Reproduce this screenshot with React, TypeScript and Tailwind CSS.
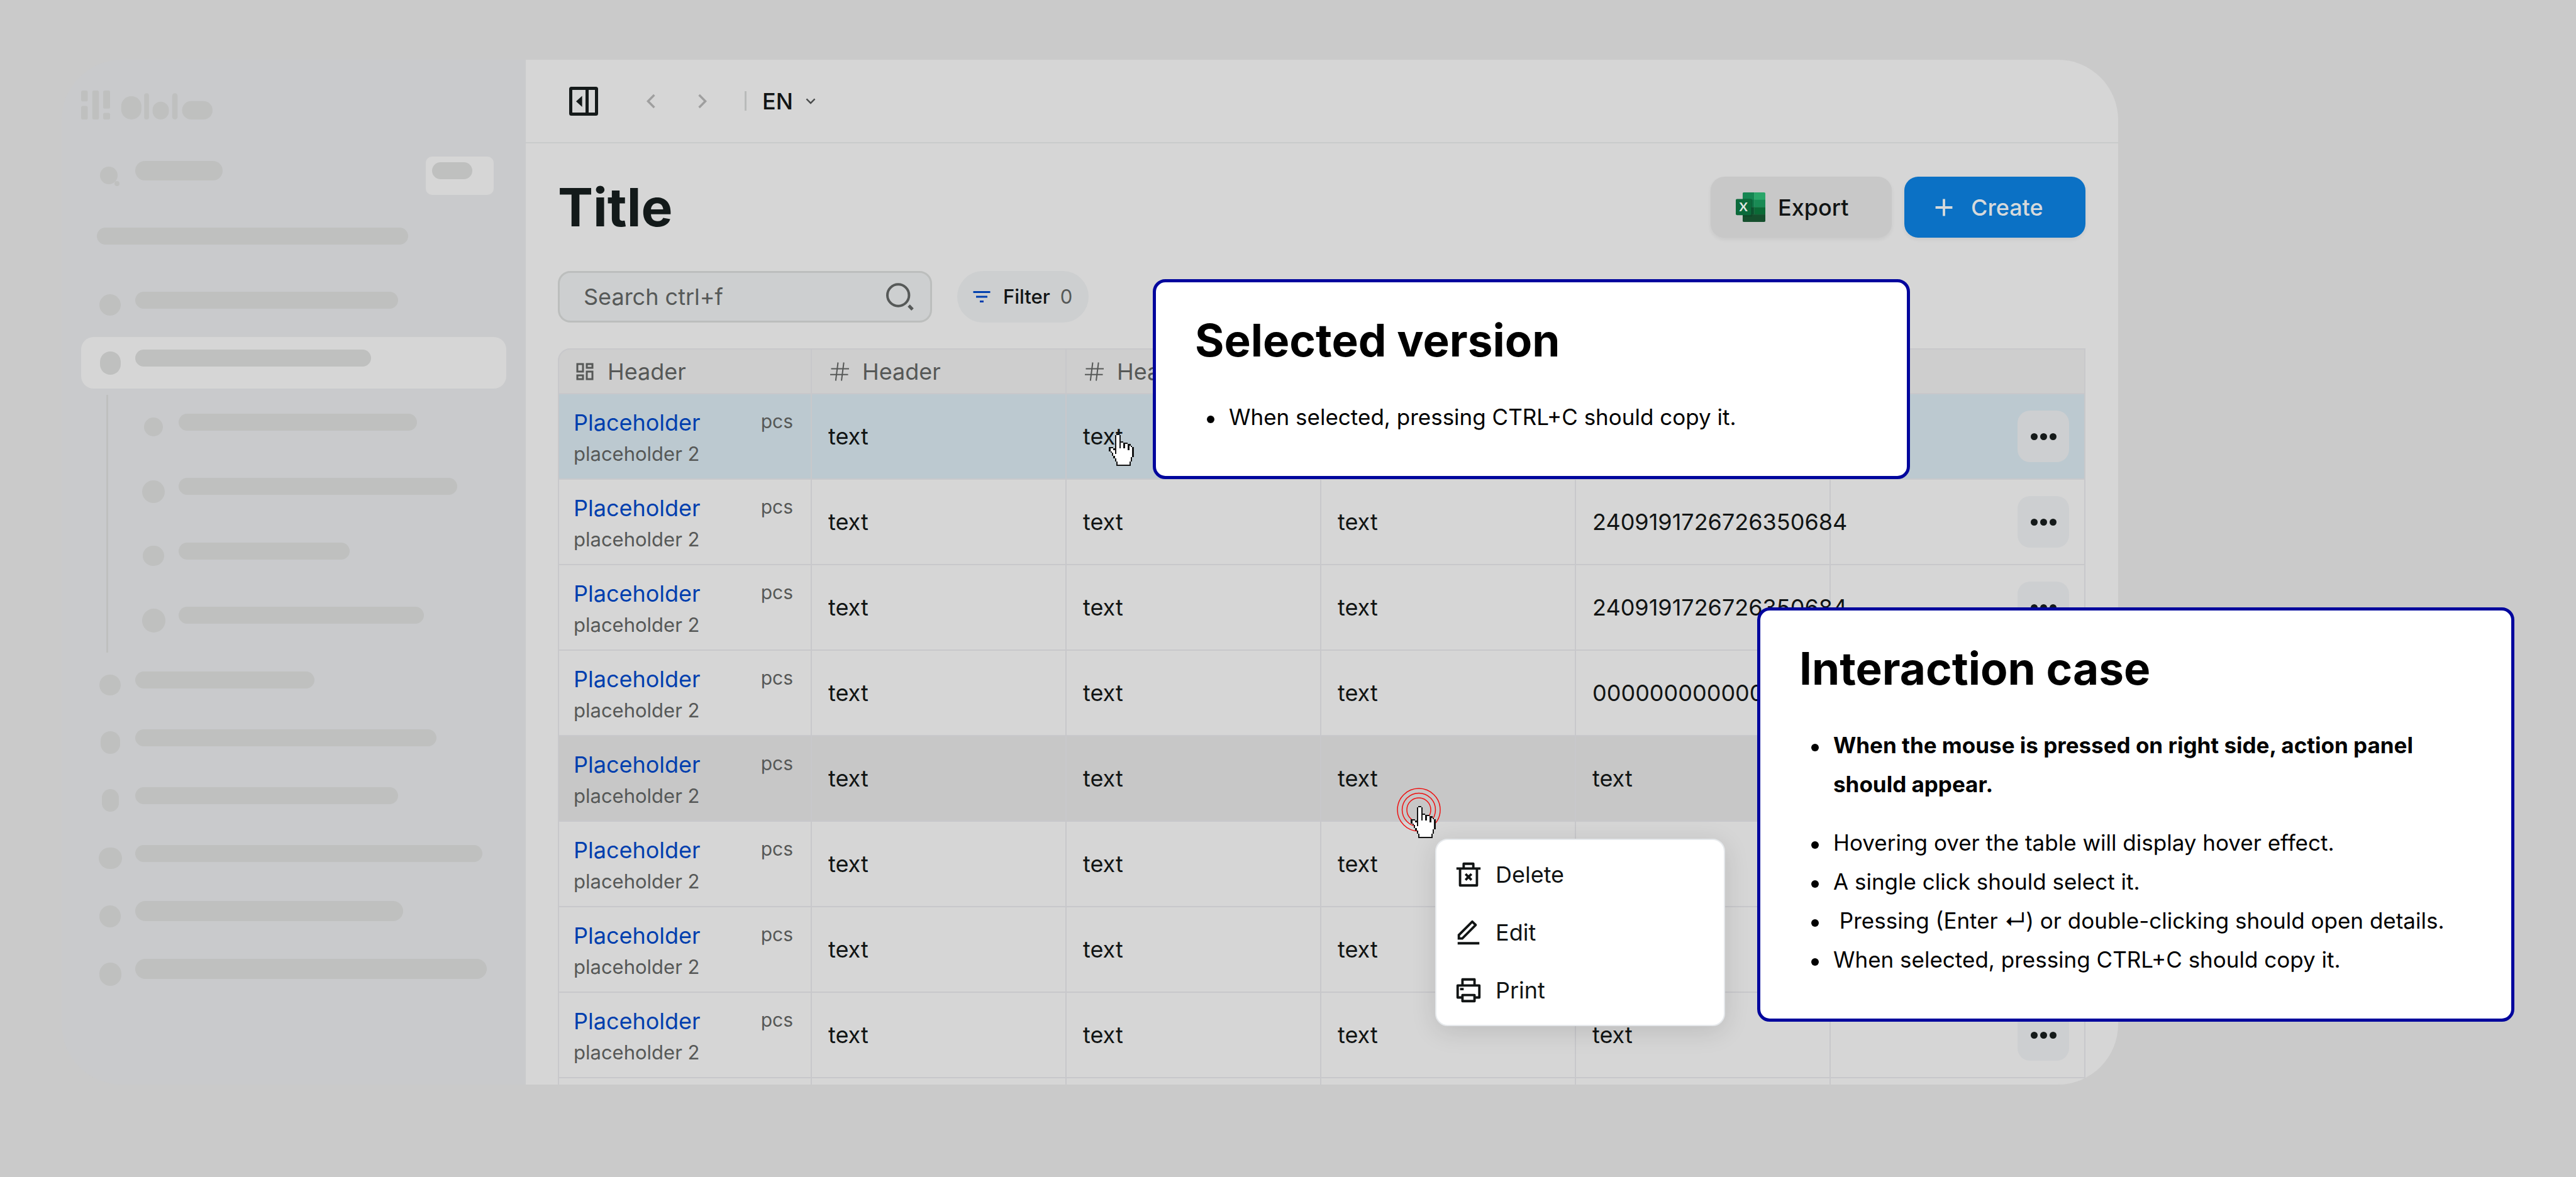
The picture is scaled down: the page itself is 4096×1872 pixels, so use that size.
import React from "react";

type IconProps = { d: string; className?: string };

function Icon({ d, className }: IconProps) {
  return (
    <svg viewBox="0 0 24 24" fill="currentColor" aria-hidden="true" className={`shrink-0 ${className ?? ""}`}>
      <path d={d} />
    </svg>
  );
}

const ICONS = {
  left: "M10.828 12l4.95 4.95-1.414 1.415L8 12l6.364-6.364 1.414 1.414z",
  right: "M13.172 12l-4.95-4.95 1.414-1.414L16 12l-6.364 6.364-1.414-1.414z",
  down: "M12 13.172l4.95-4.95 1.414 1.414L12 16 5.636 9.636 7.05 8.222z",
  plus: "M11 11V5h2v6h6v2h-6v6h-2v-6H5v-2z",
  filter: "M10 18h4v-2h-4v2zM3 6v2h18V6H3zm3 7h12v-2H6v2z",
  dashboard:
    "M13 21V11h8v10h-8zM3 13V3h8v10H3zm6-2V5H5v6h4zM3 21v-6h8v6H3zm2-2h4v-2H5v2zm10 0h4v-6h-4v6zM13 3h8v6h-8V3zm2 2v2h4V5h-4z",
  trash:
    "M17 6h5v2h-2v13a1 1 0 0 1-1 1H5a1 1 0 0 1-1-1V8H2V6h5V3a1 1 0 0 1 1-1h8a1 1 0 0 1 1 1v3zm1 2H6v12h12V8zm-4.586 6l1.768 1.768-1.414 1.414L12 15.414l-1.768 1.768-1.414-1.414L10.586 14l-1.768-1.768 1.414-1.414L12 12.586l1.768-1.768 1.414 1.414L13.414 14zM9 4v2h6V4H9z",
  edit: "M6.414 16L16.556 5.858l-1.414-1.414L5 14.586V16h1.414zm.829 2H3v-4.243L14.435 2.322a1 1 0 0 1 1.414 0l2.829 2.829a1 1 0 0 1 0 1.414L7.243 18zM3 20h18v2H3v-2z",
  printer:
    "M6 19H3a1 1 0 0 1-1-1V8a1 1 0 0 1 1-1h3V3a1 1 0 0 1 1-1h10a1 1 0 0 1 1 1v4h3a1 1 0 0 1 1 1v10a1 1 0 0 1-1 1h-3v2a1 1 0 0 1-1 1H7a1 1 0 0 1-1-1v-2zm0-2v-1a1 1 0 0 1 1-1h10a1 1 0 0 1 1 1v1h2V9H4v8h2zM8 4v3h8V4H8zm0 13v3h8v-3H8zm-3-7h3v2H5v-2z",
};

function PanelIcon() {
  return (
    <svg viewBox="0 0 46 46" className="size-[46px]" aria-hidden="true">
      <rect x="2.5" y="2.5" width="41" height="41" rx="1" fill="none" stroke="currentColor" strokeWidth="5" />
      <rect x="26" y="3" width="5" height="40" fill="currentColor" />
      <path d="M20.6 14.6v17.4L11 23.3z" fill="currentColor" />
    </svg>
  );
}

function SearchIcon() {
  return (
    <svg viewBox="0 0 44 44" className="size-[44px] shrink-0 text-[#565958]" fill="none" stroke="currentColor" aria-hidden="true">
      <circle cx="19.2" cy="19.5" r="17.2" strokeWidth="4" />
      <path d="M36 36l6 6.2" strokeWidth="5" />
    </svg>
  );
}

function HashIcon() {
  return (
    <svg viewBox="0 0 36 36" className="size-[36px] shrink-0" fill="none" stroke="currentColor" strokeWidth="2" aria-hidden="true">
      <path d="M4.500 13.500h28.500M3 22.700h28.500M15.500 3.500l-3.700 29M24.700 3.500l-3.700 29" />
    </svg>
  );
}

function ExcelIcon() {
  return (
    <svg viewBox="0 0 78 78" className="size-[47px] shrink-0" aria-hidden="true">
      <defs>
        <clipPath id="sheet">
          <rect x="18" y="0" width="60" height="78" rx="3" />
        </clipPath>
      </defs>
      <g clipPath="url(#sheet)">
        <rect x="18" y="0" width="31" height="20" fill="#158652" />
        <rect x="48.500" y="0" width="30" height="20" fill="#2aa669" />
        <rect x="18" y="19.500" width="31" height="20" fill="#107848" />
        <rect x="48.500" y="19.500" width="30" height="20" fill="#198a54" />
        <rect x="18" y="39" width="31" height="20" fill="#0f5632" />
        <rect x="48.500" y="39" width="30" height="20" fill="#0b6a36" />
        <rect x="18" y="58.300" width="60" height="20" fill="#154f2d" />
        <rect x="18" y="17" width="26" height="47" rx="4" fill="#0a3d22" opacity="0.35" />
      </g>
      <rect x="0" y="17.300" width="40.700" height="42.700" rx="3" fill="#0c6a3b" />
      <text x="20.300" y="50.500" textAnchor="middle" fontFamily="Lato" fontWeight="700" fontSize="33" fill="#dfe6e1">
        X
      </text>
    </svg>
  );
}

const HAND = [
  ".....##..........",
  "....#oo#.........",
  "....#oo#.........",
  "....#oo#.........",
  "....#oo#.........",
  "....#oo###.......",
  "....#oo#oo###....",
  "....#oo#oo#oo##..",
  "....#oo#oo#oo#o#.",
  "###.#oo#oo#oo#oo#",
  "#oo##oooooooo#oo#",
  "#ooo#ooooooooooo#",
  ".#oo#ooooooooooo#",
  "..#o#ooooooooooo#",
  "..#ooooooooooooo#",
  "...#oooooooooooo#",
  "...#ooooooooooo#.",
  "....#oooooooooo#.",
  "....#oooooooooo#.",
  ".....#oooooooo#..",
  ".....#oooooooo#..",
  ".....##########..",
];

function HandCursor() {
  return (
    <svg viewBox="0 0 17 22" shapeRendering="crispEdges" className="h-[51px] w-[40px]" aria-hidden="true">
      {HAND.flatMap((row, y) =>
        [...row].map((c, x) =>
          c === "." ? null : <rect key={`${x}-${y}`} x={x} y={y} width="1" height="1" fill={c === "#" ? "#151515" : "#ffffff"} />
        )
      )}
    </svg>
  );
}

function Logo() {
  return (
    <svg viewBox="70 128 436 96" className="h-[46px] w-[209px]" fill="#bfc0bf" aria-hidden="true">
      <rect x="70" y="128" width="22" height="36" rx="6" />
      <rect x="70" y="179" width="22" height="45" rx="6" />
      <rect x="107" y="128" width="22" height="96" rx="6" />
      <rect x="143" y="128" width="23" height="60" rx="6" />
      <rect x="143" y="202" width="23" height="22" rx="6" />
      <rect x="203" y="147" width="67" height="77" rx="33" />
      <rect x="279" y="137" width="16" height="87" rx="8" />
      <rect x="307" y="165" width="54" height="59" rx="27" />
      <rect x="372" y="137" width="18" height="87" rx="9" />
      <rect x="405" y="163" width="101" height="61" rx="30" />
    </svg>
  );
}

function SkeletonRow({ dot, bar }: { dot: string; bar: string }) {
  return (
    <div className="flex h-full items-center gap-5 pl-[26px]">
      <span className="flex w-10 justify-center">
        <span className={`rounded-[20px] bg-[#bfc0bf] ${dot}`} />
      </span>
      <span className={`mb-4 rounded-full bg-[#bfc0bf] ${bar}`} />
    </div>
  );
}

const SUB_ROWS = [
  { dot: "size-[30px]", bar: "h-[27px] w-[379px]" },
  { dot: "size-[36px]", bar: "h-[27px] w-[443px]" },
  { dot: "h-[32px] w-[34px]", bar: "h-[27px] w-[272px]" },
  { dot: "h-[38px] w-[37px]", bar: "h-[27px] w-[390px]" },
];

const LOWER_ROWS = [
  { dot: "h-[33px] w-[34px]", bar: "h-[27px] w-[285px]" },
  { dot: "h-[36px] w-[31px]", bar: "h-[27px] w-[479px]" },
  { dot: "h-[36px] w-[27px]", bar: "h-[27px] w-[418px]" },
  { dot: "h-[34px] w-[37px]", bar: "h-[27px] w-[552px]" },
  { dot: "h-[35px] w-[34px]", bar: "h-[32px] w-[426px]" },
  { dot: "h-[37px] w-[35px]", bar: "h-[32px] w-[559px]" },
];

function Sidebar() {
  return (
    <aside className="w-[738px] shrink-0 rounded-l-[96px] bg-[#c9cacc] px-[31px] pt-[49px]">
      <Logo />
      <div className="mt-[59px] flex h-[61px] items-center pl-[26px]">
        <svg viewBox="0 0 40 34" className="h-[34px] w-10" fill="#bfc0bf" aria-hidden="true">
          <circle cx="18" cy="16" r="14" />
          <circle cx="31" cy="29" r="4" />
        </svg>
        <span className="mb-4 ml-5 h-[31px] w-[139px] rounded-full bg-[#bfc0bf]" />
        <span className="mr-5 ml-auto h-[61px] w-[108px] rounded-[10px] bg-[#d6d6d6] px-[10px] pt-[9px]">
          <span className="block h-[27px] w-[64px] rounded-full bg-[#bfc0bf]" />
        </span>
      </div>
      <div className="mt-[27px] flex h-[92px] items-center pl-[25px]">
        <span className="mb-4 h-[27px] w-[495px] rounded-full bg-[#bfc0bf]" />
      </div>
      <nav aria-label="Main" className="mt-[10px]">
        <div className="h-[92px]">
          <SkeletonRow dot="size-[34px]" bar="h-[27px] w-[418px]" />
        </div>
        <div className="my-[5px] h-[82px] rounded-[20px] bg-[#d6d6d6]">
          <SkeletonRow dot="h-[37px] w-[33px]" bar="h-[27px] w-[375px]" />
        </div>
        <ul className="mt-[10px] ml-10 grid h-[410px] grid-rows-4 border-l-[3px] border-[#bfc0bf] pl-[26px]">
          {SUB_ROWS.map((r, i) => (
            <li key={i}>
              <SkeletonRow {...r} />
            </li>
          ))}
        </ul>
        <ul className="mt-[5px]">
          {LOWER_ROWS.map((r, i) => (
            <li key={i} className="h-[92px]">
              <SkeletonRow {...r} />
            </li>
          ))}
        </ul>
      </nav>
    </aside>
  );
}

function TopBar() {
  return (
    <header className="flex h-[133px] items-center border-b-2 border-[#c9cbcb] pl-[69px]">
      <button type="button" aria-label="Collapse sidebar" className="text-[#151a1a]">
        <PanelIcon />
      </button>
      <button type="button" aria-label="Back" className="ml-[63px] text-[#9f9f9f]">
        <Icon d={ICONS.left} className="size-[42px]" />
      </button>
      <button type="button" aria-label="Forward" className="ml-10 text-[#9f9f9f]">
        <Icon d={ICONS.right} className="size-[42px]" />
      </button>
      <span className="ml-[46px] h-[31px] w-[3px] bg-[#b9bbba]" />
      <label className="ml-[25px] flex items-center gap-[14px] text-[#4a4c4c]">
        <select aria-label="Language" className="appearance-none bg-transparent text-[36px] leading-[46px] font-medium text-[#111414]">
          <option>EN</option>
        </select>
        <Icon d={ICONS.down} className="size-[28px]" />
      </label>
    </header>
  );
}

const ROWS: { value: string; state?: "selected" | "hover" }[] = [
  { value: "2409191726726350684", state: "selected" },
  { value: "2409191726726350684" },
  { value: "2409191726726350684" },
  { value: "0000000000000" },
  { value: "text", state: "hover" },
  { value: "text" },
  { value: "text" },
  { value: "text" },
];

const CELL = "border-r-2 border-b-2 border-[#c8c8cb] p-0 pl-[26px] text-left whitespace-nowrap";

function DataTable() {
  return (
    <table className="mt-[41px] w-full table-fixed border-separate border-spacing-0 text-[36px] leading-[46px]">
      <thead className="bg-[#cecece] text-[#565857]">
        <tr className="h-[73px]">
          <th className="w-[404px] rounded-tl-[20px] border-2 border-[#c8c8cb] p-0 pl-[23px] text-left font-normal">
            <span className="flex items-center gap-[18px]">
              <Icon d={ICONS.dashboard} className="size-[36px]" />
              Header
            </span>
          </th>
          {[1, 2, 3, 4].map((n) => (
            <th key={n} className={`border-t-2 font-normal ${CELL}`}>
              <span className="flex items-center gap-[18px]">
                <HashIcon />
                Header
              </span>
            </th>
          ))}
          <th aria-label="Actions" className={`border-t-2 ${CELL}`} />
        </tr>
      </thead>
      <tbody className="text-[#111414]">
        {ROWS.map((row, i) => (
          <tr
            key={i}
            className={`h-[136px] ${row.state === "selected" ? "bg-[#bcc9d0]" : row.state === "hover" ? "bg-[#c7c7c7]" : ""}`}
          >
            <td className="border-r-2 border-b-2 border-l-2 border-[#c8c8cb] p-0 pt-1 pr-[28px] pl-[23px]">
              <div className="flex justify-between">
                <div>
                  <a href="#details" className="block leading-[52px] text-[#003fae]">
                    Placeholder
                  </a>
                  <div className="text-[31px] leading-[48px] text-[#565857]">placeholder 2</div>
                </div>
                <span className="text-[30px] leading-[48px] text-[#565857]">pcs</span>
              </div>
            </td>
            <td className={CELL}>text</td>
            <td className={CELL}>text</td>
            <td className={CELL}>text</td>
            <td className={CELL}>{row.value}</td>
            <td className={CELL}>
              <button
                type="button"
                aria-label="Row actions"
                className="mr-6 ml-auto flex size-[82px] items-center justify-center gap-[4px] rounded-[20px] bg-[#cdcfd1]"
              >
                <span className="size-[11px] rounded-full bg-[#151a1a]" />
                <span className="size-[11px] rounded-full bg-[#151a1a]" />
                <span className="size-[11px] rounded-full bg-[#151a1a]" />
              </button>
            </td>
          </tr>
        ))}
        <tr aria-hidden="true" className="h-[10px]">
          <td className="border-x-2 border-[#c8c8cb] p-0" />
          {[1, 2, 3, 4, 5].map((n) => (
            <td key={n} className="border-r-2 border-[#c8c8cb] p-0" />
          ))}
        </tr>
      </tbody>
    </table>
  );
}

function Workspace() {
  return (
    <main className="min-w-0 flex-1 overflow-hidden rounded-r-[96px] bg-[#d6d6d6]">
      <TopBar />
      <div className="pt-[53px] pr-[52px] pl-[51px]">
        <div className="flex items-center justify-between">
          <h1 className="text-[84px] leading-[97px] font-bold text-[#131a1a]">Title</h1>
          <div className="flex gap-5 text-[36px] font-medium">
            <button
              type="button"
              className="flex h-[97px] w-[288px] items-center gap-5 rounded-[22px] bg-[#c8c8c8] pl-10 text-[#111414] shadow-[0_3px_6px_rgba(0,0,0,0.06)]"
            >
              <ExcelIcon />
              Export
            </button>
            <button
              type="button"
              className="flex h-[97px] w-[288px] items-center gap-5 rounded-[22px] bg-[#0b71c5] pl-10 text-[#d6d9db] shadow-[0_3px_6px_rgba(0,0,0,0.06)]"
            >
              <Icon d={ICONS.plus} className="size-[46px]" />
              Create
            </button>
          </div>
        </div>
        <div className="mt-[53px] flex gap-10">
          <label className="flex h-[82px] w-[595px] items-center rounded-[20px] border-[3px] border-[#bcbebd] bg-[#cdcfd0] pr-[26px] pl-[38px]">
            <input
              type="search"
              aria-label="Search"
              placeholder="Search ctrl+f"
              className="min-w-0 flex-1 bg-transparent text-[36px] leading-[46px] outline-none placeholder:text-[#565958]"
            />
            <SearchIcon />
          </label>
          <button
            type="button"
            className="flex h-[82px] items-center gap-4 rounded-full bg-[#cdcfd0] pr-[26px] pl-[21px] text-[31px] font-medium text-[#111414]"
          >
            <Icon d={ICONS.filter} className="size-[36px] text-[#003fae]" />
            Filter
            <span className="font-normal text-[#565958]">0</span>
          </button>
        </div>
        <DataTable />
      </div>
    </main>
  );
}

function NoteItem({ children, bold }: { children: React.ReactNode; bold?: boolean }) {
  return (
    <li className={`flex gap-[23px] ${bold ? "mb-[31px] font-bold" : ""}`}>
      <span className="mt-[29px] size-3 shrink-0 rounded-full bg-black" />
      <span className="whitespace-pre-wrap">{children}</span>
    </li>
  );
}

function NoteCard({ title, className, children }: { title: string; className: string; children: React.ReactNode }) {
  return (
    <section
      className={`absolute w-[1204px] rounded-[20px] border-[5px] border-[#00069d] bg-white px-[62px] pt-[49px] pb-[63px] text-black ${className}`}
    >
      <h2 className="text-[71px] leading-[86px] font-bold">{title}</h2>
      <ul className="mt-12 pl-[19px] text-[35px] leading-[62px]">{children}</ul>
    </section>
  );
}

const MENU = [
  { label: "Delete", d: ICONS.trash },
  { label: "Edit", d: ICONS.edit },
  { label: "Print", d: ICONS.printer },
];

function ContextMenu() {
  return (
    <div
      role="menu"
      className="absolute top-[1334px] left-[2282px] w-[461px] rounded-[20px] border-2 border-[#e6e9ec] bg-white py-[9px] shadow-[0_8px_40px_rgba(0,0,0,0.12)]"
    >
      {MENU.map((m) => (
        <button
          key={m.label}
          type="button"
          role="menuitem"
          className="flex h-[92px] w-full items-center gap-5 pl-[28px] text-[36px] leading-[46px] text-[#111414]"
        >
          <Icon d={m.d} className="size-[46px]" />
          {m.label}
        </button>
      ))}
    </div>
  );
}

export default function App() {
  return (
    <div className="relative min-h-screen bg-[#cacaca] pt-[95px] pr-[728px] pb-[147px] pl-[98px] font-['Inter',sans-serif]">
      <div className="flex">
        <Sidebar />
        <Workspace />
      </div>

      <div className="absolute top-[690px] left-[1763px]">
        <HandCursor />
      </div>
      <ContextMenu />
      <svg viewBox="0 0 72 72" className="absolute top-[1252px] left-[2220px] size-[72px]" fill="none" stroke="#ee1111" strokeWidth="1.500" aria-hidden="true">
        <circle cx="36" cy="36" r="34" />
        <circle cx="36" cy="36" r="26.500" />
        <circle cx="36" cy="36" r="19" />
      </svg>
      <div className="absolute top-[1282px] left-[2243px]">
        <HandCursor />
      </div>

      <NoteCard title="Selected version" className="top-[444px] left-[1833px]">
        <NoteItem>When selected, pressing CTRL+C should copy it.</NoteItem>
      </NoteCard>
      <NoteCard title="Interaction case" className="top-[966px] left-[2794px]">
        <NoteItem bold>When the mouse is pressed on right side, action panel should appear.</NoteItem>
        <NoteItem>Hovering over the table will display hover effect.</NoteItem>
        <NoteItem>A single click should select it.</NoteItem>
        <NoteItem>{" Pressing (Enter ↵) or double-clicking should open details."}</NoteItem>
        <NoteItem>When selected, pressing CTRL+C should copy it.</NoteItem>
      </NoteCard>
    </div>
  );
}
